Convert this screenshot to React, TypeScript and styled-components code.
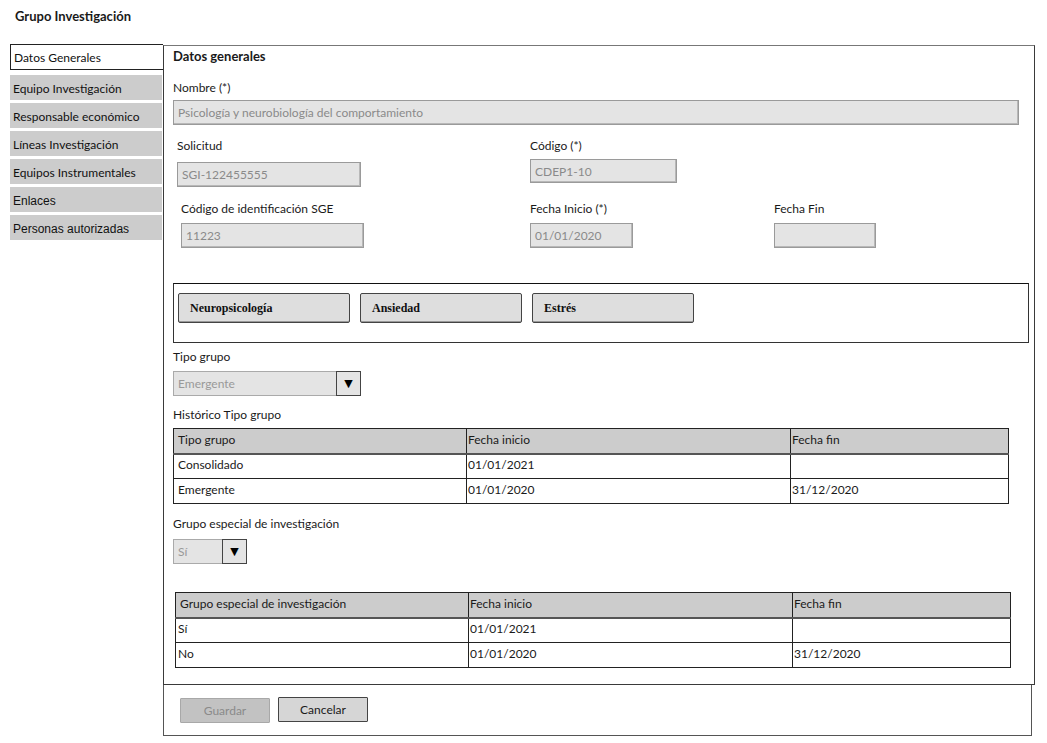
import React from "react";
import styled, { createGlobalStyle } from "styled-components";

const Global = createGlobalStyle`
  * { box-sizing: border-box; }
  html, body { margin: 0; padding: 0; background: #fff; }
  body { font-family: Lato, "Open Sans", sans-serif; font-size: 12px; color: #1a1a1a; }
`;

const Page = styled.div`
  width: 1047px;
  height: 743px;
  overflow: hidden;
`;

const Title = styled.div`
  height: 44px;
  padding: 8px 0 0 15px;
  font-weight: 700;
  font-size: 13px;
  line-height: 16px;
`;

const Body = styled.div`
  display: flex;
  padding-left: 10px;
`;

const Sidebar = styled.nav`
  width: 153px;
  display: flex;
  flex-direction: column;
`;

const NavItem = styled.div<{ $active?: boolean; $arial?: boolean }>`
  height: ${(p) => (p.$active ? 26 : 25)}px;
  margin-bottom: ${(p) => (p.$active ? 5 : 3)}px;
  padding-left: 3px;
  display: flex;
  align-items: center;
  font-size: 12px;
  font-family: ${(p) => (p.$arial ? '"Liberation Sans", Arial, sans-serif' : 'Lato, sans-serif')};
  color: #111;
  background: ${(p) => (p.$active ? "#fff" : "#cccccc")};
  border: ${(p) => (p.$active ? "1px solid #222" : "none")};
  border-right: none;
  width: ${(p) => (p.$active ? 153 : 152)}px;
  padding-top: ${(p) => (p.$active ? 1 : 2)}px;
`;

const MainCol = styled.div`
  display: flex;
  flex-direction: column;
`;

const Panel = styled.section`
  margin-top: 1px;
  width: 872px;
  height: 640px;
  border: 1px solid #3a3a3a;
  border-top-color: #777;
  padding-left: 9px;
  display: flex;
  flex-direction: column;
  align-items: flex-start;
`;

const SectionTitle = styled.h2`
  margin: 3px 0 0;
  font-size: 13px;
  font-weight: 700;
  line-height: 15px;
`;

const Label = styled.div<{ $mt?: number }>`
  margin-top: ${(p) => p.$mt ?? 0}px;
  line-height: 15px;
  font-size: 12px;
  color: #1a1a1a;
`;

const Input = styled.div<{ $w: number; $h?: number; $mt?: number }>`
  width: ${(p) => p.$w}px;
  height: ${(p) => p.$h ?? 25}px;
  margin-top: ${(p) => p.$mt ?? 0}px;
  background: #e4e4e4;
  border: 1px solid #9a9a9a;
  box-shadow: inset -1px -1px 0 #b8b8b8;
  padding-left: 4px;
  display: flex;
  align-items: center;
  color: #8a8a8a;
  font-size: 12px;
`;

const FieldRow = styled.div<{ $mt: number }>`
  margin-top: ${(p) => p.$mt}px;
  display: grid;
  grid-template-columns: 357px 244px auto;
  align-items: start;
`;

const Field = styled.div<{ $indent?: number }>`
  display: flex;
  flex-direction: column;
  padding-left: ${(p) => p.$indent ?? 0}px;
`;

const ChipBox = styled.div`
  margin-top: 35px;
  width: 856px;
  height: 60px;
  border: 1px solid #333;
  border-top-color: #111;
  padding: 9px 0 0 4px;
  display: flex;
  gap: 10px;
  align-items: flex-start;
`;

const Chip = styled.div<{ $w: number }>`
  width: ${(p) => p.$w}px;
  height: 30px;
  background: #dedede;
  border: 1px solid #444;
  border-radius: 2px;
  box-shadow: inset 0 -1px 0 #999;
  padding-left: 11px;
  display: flex;
  align-items: center;
  font-family: "Liberation Serif", "Times New Roman", serif;
  font-weight: 700;
  font-size: 12px;
  color: #111;
`;

const Select = styled.div<{ $w: number; $mt: number }>`
  margin-top: ${(p) => p.$mt}px;
  width: ${(p) => p.$w}px;
  height: 25px;
  display: flex;
  background: #e4e4e4;
  border: 1px solid #aaa;
`;

const SelectValue = styled.div`
  flex: 1;
  display: flex;
  align-items: center;
  padding-left: 4px;
  color: #999;
  font-size: 12px;
`;

const SelectButton = styled.div`
  width: 25px;
  margin: -1px -1px -1px 0;
  border: 1px solid #444;
  background: #e4e4e4;
  display: flex;
  align-items: center;
  justify-content: center;
  font-size: 11px;
  color: #000;
  font-family: "DejaVu Sans", sans-serif;
`;

const Table = styled.table<{ $mt: number; $ml?: number }>`
  margin-top: ${(p) => p.$mt}px;
  margin-left: ${(p) => p.$ml ?? 0}px;
  width: 836px;
  border-collapse: collapse;
  table-layout: fixed;
  font-size: 12px;
  border: 1px solid #222;
`;

const Th = styled.th<{ $pl?: number }>`
  height: 25px;
  background: #cccccc;
  text-align: left;
  font-weight: 400;
  padding: 0 0 2px ${(p) => p.$pl ?? 1}px;
  border-left: 1px solid #222;
  border-bottom: 2px solid #555;
  color: #1a1a1a;
`;

const Td = styled.td<{ $pl?: number }>`
  height: 25px;
  padding: 0 0 4px ${(p) => p.$pl ?? 1}px;
  border-left: 1px solid #222;
  border-top: 1px solid #222;
  color: #1a1a1a;
`;

const Footer = styled.footer`
  width: 869px;
  height: 51px;
  border: 1px solid #555;
  border-top: none;
  padding: 12px 0 0 16px;
  display: flex;
  gap: 8px;
  align-items: flex-start;
`;

const Button = styled.button<{ $disabled?: boolean }>`
  width: 90px;
  height: 25px;
  margin-top: ${(p) => (p.$disabled ? 1 : 0)}px;
  font-family: Lato, sans-serif;
  font-size: 12px;
  padding: 0;
  background: ${(p) => (p.$disabled ? "#c2c2c2" : "#d6d6d6")};
  color: ${(p) => (p.$disabled ? "#8a8a8a" : "#1a1a1a")};
  border: 1px solid ${(p) => (p.$disabled ? "#a8a8a8" : "#444")};
  border-radius: 1px;
`;

const navItems = [
  { label: "Equipo Investigación" },
  { label: "Responsable económico" },
  { label: "Líneas Investigación" },
  { label: "Equipos Instrumentales" },
  { label: "Enlaces", arial: true },
  { label: "Personas autorizadas", arial: true },
];

type Row = [string, string, string];

function HistoryTable({ head, rows, mt, ml, pl }: { head: Row; rows: Row[]; mt: number; ml?: number; pl: number }) {
  return (
    <Table $mt={mt} $ml={ml}>
      <colgroup>
        <col style={{ width: 293 }} />
        <col style={{ width: 324 }} />
        <col />
      </colgroup>
      <thead>
        <tr>
          <Th $pl={4}>{head[0]}</Th>
          <Th>{head[1]}</Th>
          <Th>{head[2]}</Th>
        </tr>
      </thead>
      <tbody>
        {rows.map((r, i) => (
          <tr key={i}>
            <Td $pl={pl}>{r[0]}</Td>
            <Td>{r[1]}</Td>
            <Td>{r[2]}</Td>
          </tr>
        ))}
      </tbody>
    </Table>
  );
}

export default function App() {
  return (
    <Page>
      <Global />
      <Title>Grupo Investigación</Title>
      <Body>
        <Sidebar>
          <NavItem $active>Datos Generales</NavItem>
          {navItems.map((n) => (
            <NavItem key={n.label} $arial={n.arial}>
              {n.label}
            </NavItem>
          ))}
        </Sidebar>
        <MainCol>
          <Panel>
            <SectionTitle>Datos generales</SectionTitle>
            <Label $mt={16}>Nombre (*)</Label>
            <Input $w={846} $h={25} $mt={5}>Psicología y neurobiología del comportamiento</Input>

            <FieldRow $mt={13}>
              <Field $indent={4}>
                <Label>Solicitud</Label>
                <Input $w={184} $mt={9}>SGI-122455555</Input>
              </Field>
              <Field>
                <Label>Código (*)</Label>
                <Input $w={147} $h={24} $mt={6}>CDEP1-10</Input>
              </Field>
            </FieldRow>

            <FieldRow $mt={14}>
              <Field $indent={8}>
                <Label>Código de identificación SGE</Label>
                <Input $w={183} $mt={7}>11223</Input>
              </Field>
              <Field>
                <Label>Fecha Inicio (*)</Label>
                <Input $w={103} $mt={7}>01/01/2020</Input>
              </Field>
              <Field>
                <Label>Fecha Fin</Label>
                <Input $w={102} $mt={7}></Input>
              </Field>
            </FieldRow>

            <ChipBox>
              <Chip $w={172}>Neuropsicología</Chip>
              <Chip $w={162}>Ansiedad</Chip>
              <Chip $w={162}>Estrés</Chip>
            </ChipBox>

            <Label $mt={6}>Tipo grupo</Label>
            <Select $w={188} $mt={7}>
              <SelectValue>Emergente</SelectValue>
              <SelectButton>▼</SelectButton>
            </Select>

            <Label $mt={11}>Histórico Tipo grupo</Label>
            <HistoryTable
              mt={6}
              pl={4}
              head={["Tipo grupo", "Fecha inicio", "Fecha fin"]}
              rows={[
                ["Consolidado", "01/01/2021", ""],
                ["Emergente", "01/01/2020", "31/12/2020"],
              ]}
            />

            <Label $mt={12}>Grupo especial de investigación</Label>
            <Select $w={74} $mt={8}>
              <SelectValue>Sí</SelectValue>
              <SelectButton>▼</SelectButton>
            </Select>

            <HistoryTable
              mt={28}
              ml={2}
              pl={2}
              head={["Grupo especial de investigación", "Fecha inicio", "Fecha fin"]}
              rows={[
                ["Sí", "01/01/2021", ""],
                ["No", "01/01/2020", "31/12/2020"],
              ]}
            />
          </Panel>
          <Footer>
            <Button $disabled>Guardar</Button>
            <Button>Cancelar</Button>
          </Footer>
        </MainCol>
      </Body>
    </Page>
  );
}
